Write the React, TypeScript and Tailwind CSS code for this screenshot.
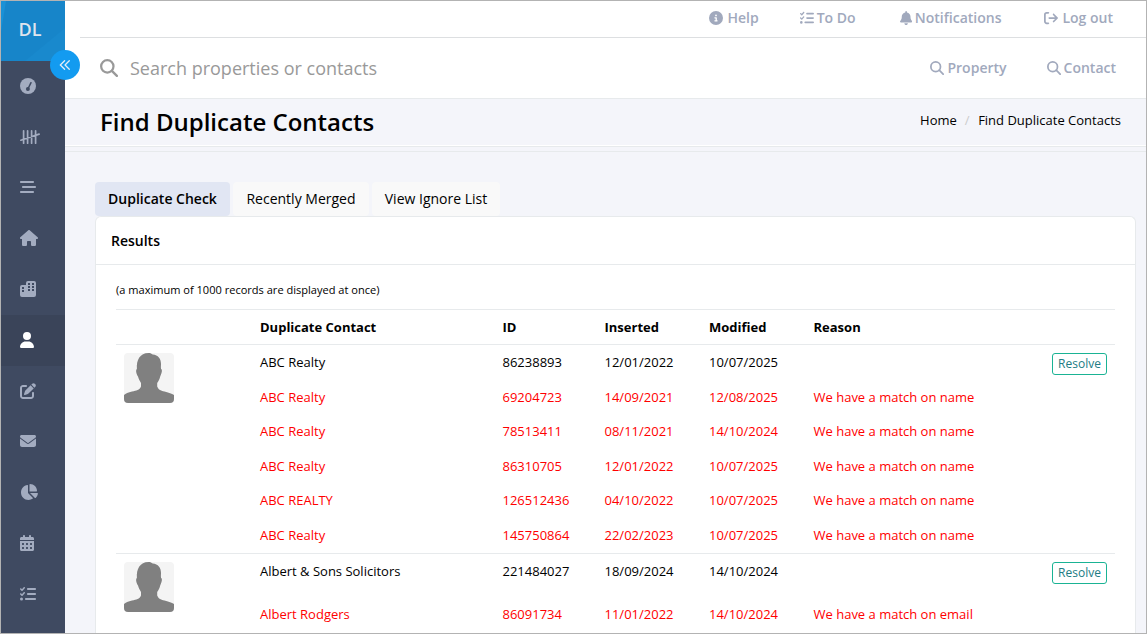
import type { ReactNode } from "react";
import {
  FaArrowRightFromBracket,
  FaBarsStaggered,
  FaBell,
  FaCalendarDays,
  FaChartPie,
  FaCircleInfo,
  FaEnvelope,
  FaHouse,
  FaListCheck,
  FaPenToSquare,
  FaUser,
} from "react-icons/fa6";

type Contact = {
  name: string;
  id: string;
  inserted: string;
  modified: string;
  reason?: string;
};

const groups: { rows: Contact[]; first: string }[] = [
  {
    first: "h-[34.6px]",
    rows: [
      { name: "ABC Realty", id: "86238893", inserted: "12/01/2022", modified: "10/07/2025" },
      { name: "ABC Realty", id: "69204723", inserted: "14/09/2021", modified: "12/08/2025", reason: "We have a match on name" },
      { name: "ABC Realty", id: "78513411", inserted: "08/11/2021", modified: "14/10/2024", reason: "We have a match on name" },
      { name: "ABC Realty", id: "86310705", inserted: "12/01/2022", modified: "10/07/2025", reason: "We have a match on name" },
      { name: "ABC REALTY", id: "126512436", inserted: "04/10/2022", modified: "10/07/2025", reason: "We have a match on name" },
      { name: "ABC Realty", id: "145750864", inserted: "22/02/2023", modified: "10/07/2025", reason: "We have a match on name" },
    ],
  },
  {
    first: "h-[43px]",
    rows: [
      { name: "Albert & Sons Solicitors", id: "221484027", inserted: "18/09/2024", modified: "14/10/2024" },
      { name: "Albert Rodgers", id: "86091734", inserted: "11/01/2022", modified: "14/10/2024", reason: "We have a match on email" },
    ],
  },
];

const columns = "grid grid-cols-[242.5px_102px_104.5px_104.5px_1fr]";

function GaugeIcon() {
  return (
    <svg viewBox="0 0 16 16" className="h-4 w-4">
      <circle cx="8" cy="8" r="8" fill="currentColor" />
      <path d="M7.9 11 11 4.7" stroke="#3f4a61" strokeWidth="1.5" strokeLinecap="round" />
      <circle cx="7.9" cy="11" r="2" fill="#3f4a61" />
    </svg>
  );
}

function TallyIcon() {
  return (
    <svg viewBox="0 0 20 16" className="h-4 w-5" fill="none" stroke="currentColor" strokeWidth="1.7" strokeLinecap="round">
      <path d="M3.6 1.8v12.4M7.600 1.8v12.4M11.600 1.8v12.4M15.600 1.8v12.4M.9 11.2l18.2-6.1" />
    </svg>
  );
}

function BuildingsIcon() {
  return (
    <svg viewBox="0 0 16 16" className="h-4 w-4" fill="currentColor" fillRule="evenodd">
      <path d="M8 0h6a2 2 0 0 1 2 2v12a2 2 0 0 1-2 2H2a2 2 0 0 1-2-2V6a2 2 0 0 1 2-2h4V2a2 2 0 0 1 2-2ZM8 2v2h2V2ZM12 2v2h2V2ZM8 5v2h2V5ZM12 5v2h2V5ZM8 8v2h2V8ZM12 8v2h2V8ZM2 6v2h2V6ZM2 9v2h2V9Z" />
    </svg>
  );
}

function SearchIcon({ className }: { className: string }) {
  return (
    <svg viewBox="0 0 512 512" className={className} fill="none" stroke="currentColor" strokeWidth="64" strokeLinecap="round">
      <circle cx="208" cy="208" r="176" />
      <path d="m338 338 142 142" />
    </svg>
  );
}

const menu: { icon: ReactNode; active?: boolean }[] = [
  { icon: <GaugeIcon /> },
  { icon: <TallyIcon /> },
  { icon: <FaBarsStaggered className="h-4 w-4" /> },
  { icon: <FaHouse className="h-4 w-[18px]" /> },
  { icon: <BuildingsIcon /> },
  { icon: <FaUser className="h-4 w-3.5" />, active: true },
  { icon: <FaPenToSquare className="h-4 w-4" /> },
  { icon: <FaEnvelope className="h-4 w-4" /> },
  { icon: <FaChartPie className="h-4 w-[18px]" /> },
  { icon: <FaCalendarDays className="h-4 w-3.5" /> },
  { icon: <FaListCheck className="h-4 w-4" /> },
];

function Sidebar() {
  return (
    <aside className="relative z-10 w-16 shrink-0 bg-[#3f4a61] text-[#a3acc0]">
      <div className="relative flex h-[60px] items-center justify-center overflow-hidden bg-[#1785c9] text-lg font-semibold text-[#dfe4ed]">
        <svg viewBox="0 0 64 60" className="absolute inset-0 h-full w-full">
          <path d="M0 0h5L0 31Z" fill="#1a91d6" />
          <path d="M64 27v33H24Z" fill="#1989cd" />
        </svg>
        <span className="relative -left-[3px] -top-0.5">DL</span>
      </div>
      <nav>
        {menu.map((item, i) => (
          <div
            key={i}
            className={
              item.active
                ? "flex h-[50.8px] items-center bg-[#3a4459] pb-px pl-[19px] text-white"
                : "flex h-[50.8px] items-center pb-px pl-[19px]"
            }
          >
            {item.icon}
          </div>
        ))}
      </nav>
      <button className="absolute left-[49px] top-[49px] flex h-[30px] w-[30px] items-center justify-center rounded-full bg-[#139bf0] text-[#e4edf7]">
        <svg viewBox="0 0 12 12" className="h-3 w-3" fill="none" stroke="currentColor" strokeWidth="1.3" strokeLinecap="round" strokeLinejoin="round">
          <path d="M5.6 1.7 1.3 6l4.3 4.3M10.3 1.7 6 6l4.3 4.3" />
        </svg>
      </button>
    </aside>
  );
}

function Header() {
  return (
    <header className="h-[98px] border-b border-[#e7eaec] bg-white text-sm font-semibold text-[#a1a9bd]">
      <div className="ml-[15px] flex h-[37px] items-center justify-end border-b border-[#dddfe1] pb-0.5 pr-[33px]">
        <a className="flex items-center gap-1">
          <FaCircleInfo className="h-3.5 w-3.5" />
          Help
        </a>
        <a className="ml-[41px] flex items-center gap-[3px]">
          <FaListCheck className="h-3.5 w-3.5" />
          To Do
        </a>
        <a className="ml-11 flex items-center gap-[3px]">
          <FaBell className="h-3.5 w-[12.25px]" />
          Notifications
        </a>
        <a className="ml-[43px] flex items-center gap-1">
          <FaArrowRightFromBracket className="h-3.5 w-3.5" />
          Log out
        </a>
      </div>
      <div className="flex h-[60px] items-center pl-[35px] pr-[30px]">
        <SearchIcon className="h-[18px] w-[18px] text-[#999999]" />
        <span className="ml-3 text-lg font-normal text-[#999999]">Search properties or contacts</span>
        <a className="ml-auto flex items-center gap-[3px]">
          <SearchIcon className="h-3.5 w-3.5" />
          Property
        </a>
        <a className="ml-10 flex items-center gap-[3px]">
          <SearchIcon className="h-3.5 w-3.5" />
          Contact
        </a>
      </div>
    </header>
  );
}

function Avatar() {
  return (
    <svg viewBox="0 0 50 50" className="ml-2 mt-2 h-[50px] w-[50px] shrink-0 rounded bg-[#f4f4f4]">
      <path
        d="M24.5 0c2.2 0 3 .7 4.2 1.6 5.5.4 8.3 4.4 8.3 9.2 0 2-.2 3.5 0 5 1.3.9 1 2.700.5 4.200-.5 1.500-.9 2.500-1.300 3.600-.7 3-1.500 4.200-3 6.400v3.500c1.600 4.100 4.500 4.200 9 5.600 3.500 1 6.300 1.900 7.800 3V50H0v-8c1.500-1.500 4.300-2.400 8-3.400 4.500-1.200 7.500-1.500 9-5.100v-3.500c-1.500-2.200-2.300-4-3-6.400-.8-1.300-1.200-2.100-1.600-3.600-.4-1.700-.5-3.100.5-4.200C12.300 7 16 0 24.500 0Z"
        fill="#808080"
      />
    </svg>
  );
}

function ContactRow({ contact, height }: { contact: Contact; height: string }) {
  return (
    <div className={`${columns} ${height} pt-[7px] leading-5 ${contact.reason ? "text-[#ff0000]" : "text-black"}`}>
      <span>{contact.name}</span>
      <span>{contact.id}</span>
      <span>{contact.inserted}</span>
      <span>{contact.modified}</span>
      <span>{contact.reason}</span>
    </div>
  );
}

function Results() {
  return (
    <section className="rounded-t-md border border-b-0 border-[#e7eaec] bg-white">
      <h2 className="flex h-12 items-center border-b border-[#e7eaec] pl-[15px] text-sm font-semibold">Results</h2>
      <div className="px-5">
        <p className="flex h-11 items-center pt-[7px] text-[11.05px]">(a maximum of 1000 records are displayed at once)</p>
        <div className="flex h-9 items-center border-y border-[#e7eaec] pt-0.5 text-[13px] font-bold">
          <div className={`${columns} ml-36 grow`}>
            <span>Duplicate Contact</span>
            <span>ID</span>
            <span>Inserted</span>
            <span>Modified</span>
            <span>Reason</span>
          </div>
        </div>
        {groups.map((group, i) => (
          <div key={i} className="flex border-b border-[#e7eaec] text-[13px] last:pb-3">
            <div className="w-36 shrink-0">
              <Avatar />
            </div>
            <div className="grow">
              {group.rows.map((contact, n) => (
                <ContactRow key={contact.id} contact={contact} height={n === 0 ? group.first : "h-[34.6px]"} />
              ))}
            </div>
            <button className="mr-2 mt-2 h-[22px] w-[55px] shrink-0 rounded-[3px] border border-[#1ab394] text-xs text-[#217c84]">
              Resolve
            </button>
          </div>
        ))}
      </div>
    </section>
  );
}

export default function App() {
  return (
    <div className="flex h-[634px] w-[1147px] overflow-hidden border border-[#b3b3b3] bg-[#f4f5fa] font-['Open_Sans',sans-serif] text-black">
      <Sidebar />
      <main className="min-w-0 grow">
        <Header />
        <div className="h-[53px] border-b border-[#e7eaec]">
          <div className="flex h-12 items-center justify-between border-b border-[#e7eaec] pl-[35px] pr-[25px] shadow-[inset_0_-1px_0_#ffffff]">
            <h1 className="pb-0.5 text-2xl font-semibold">Find Duplicate Contacts</h1>
            <div className="flex pb-1 text-[13px]">
              <span>Home</span>
              <span className="ml-2 mr-[8.5px] text-[#cccccc]">/</span>
              <span>Find Duplicate Contacts</span>
            </div>
          </div>
        </div>
        <div className="pl-[30px] pr-2.5 pt-[30px]">
          <div className="flex h-[34px] gap-[3px] text-sm">
            <div className="flex w-[135px] items-center justify-center rounded bg-[#e1e6f3] font-semibold">Duplicate Check</div>
            <div className="flex w-[136px] items-center justify-center rounded bg-[#f9f9f9]">Recently Merged</div>
            <div className="flex w-[128px] items-center justify-center rounded bg-[#f9f9f9]">View Ignore List</div>
          </div>
          <Results />
        </div>
      </main>
    </div>
  );
}
